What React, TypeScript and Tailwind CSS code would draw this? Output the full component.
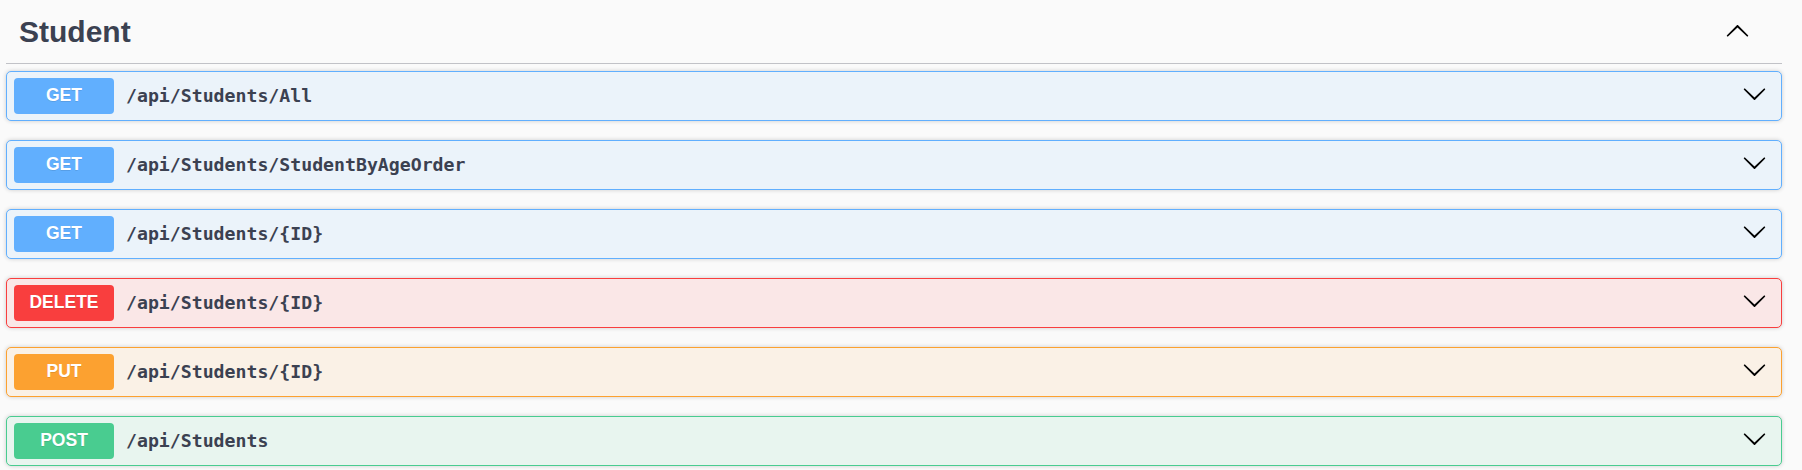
const ops = [
  { method: 'GET', path: '/api/Students/All' },
  { method: 'GET', path: '/api/Students/StudentByAgeOrder' },
  { method: 'GET', path: '/api/Students/{ID}' },
  { method: 'DELETE', path: '/api/Students/{ID}' },
  { method: 'PUT', path: '/api/Students/{ID}' },
  { method: 'POST', path: '/api/Students' },
]

const styles: Record<string, { row: string; badge: string }> = {
  GET: { row: 'bg-[#ebf3fa] border-[#61affe]', badge: 'bg-[#61affe]' },
  DELETE: { row: 'bg-[#fae7e7] border-[#f93e3e]', badge: 'bg-[#f93e3e]' },
  PUT: { row: 'bg-[#faf1e6] border-[#fca130]', badge: 'bg-[#fca130]' },
  POST: { row: 'bg-[#e8f5ef] border-[#49cc90]', badge: 'bg-[#49cc90]' },
}

const arrow =
  'M17.418 6.109c.272-.268.709-.268.979 0s.271.701 0 .969l-7.908 7.83c-.27.268-.707.268-.979 0l-7.908-7.83c-.27-.268-.27-.701 0-.969.271-.268.709-.268.979 0L10 13.25l7.418-7.141z'

function Chevron({ up = false, className = '' }: { up?: boolean; className?: string }) {
  return (
    <svg width="25" height="25" viewBox="0 0 20 20" className={`${up ? 'rotate-180' : ''} ${className}`}>
      <path d={arrow} fill="#000" />
    </svg>
  )
}

export default function App() {
  return (
    <div className="min-h-screen bg-[#fafafa] pl-[6px] pr-[20px]">
      {/* Tag header */}
      <div className="flex h-[64px] items-center justify-between border-b border-[#c1c2c7] pl-[13px] pr-[32px]">
        <h3 className="font-['Liberation_Sans',Arial,sans-serif] text-[30px] font-bold text-[#3b4151]">Student</h3>
        <Chevron up />
      </div>

      {/* Operations */}
      <div className="mt-[7px] flex flex-col gap-[19px]">
        {ops.map((op, i) => (
          <div
            key={i}
            className={`flex h-[50px] items-center rounded-[5px] border pl-[7px] pr-[14px] shadow-[0_0_4px_rgba(0,0,0,0.19)] ${styles[op.method].row}`}
          >
            <span
              className={`flex h-[36px] w-[100px] shrink-0 items-center justify-center rounded-[4px] pb-[2px] font-['Liberation_Sans',Arial,sans-serif] text-[17.5px] font-bold text-white [text-shadow:0_1px_0_rgba(0,0,0,0.1)] ${styles[op.method].badge}`}
            >
              {op.method}
            </span>
            <span className="ml-[12px] flex-1 font-['DejaVu_Sans_Mono',monospace] text-[18.2px] font-bold text-[#3b4151]">
              {op.path}
            </span>
            <Chevron className="-mt-[5px]" />
          </div>
        ))}
      </div>
    </div>
  )
}
